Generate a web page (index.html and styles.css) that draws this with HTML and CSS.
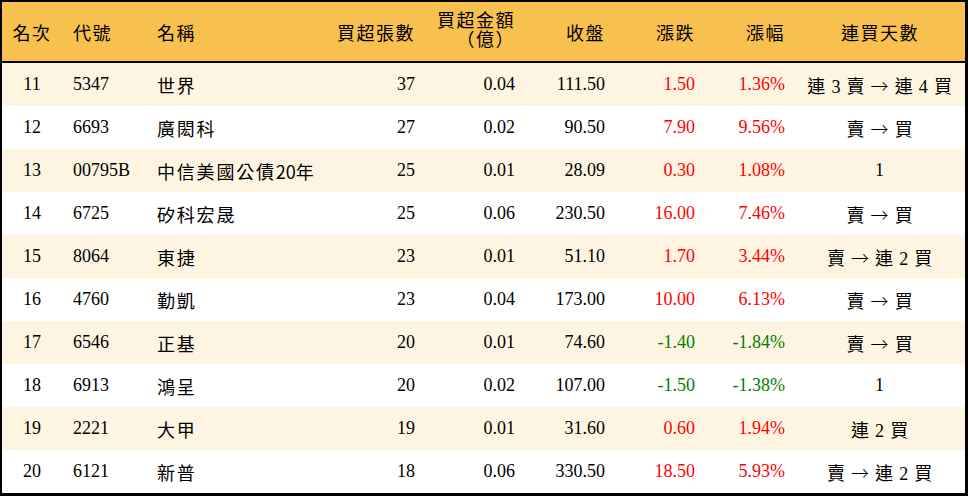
FILE: index.html
```html
<!DOCTYPE html>
<html lang="zh-Hant">
<head>
<meta charset="utf-8">
<link rel="stylesheet" href="styles.css">
</head>
<body>
<div class="board">
  <div class="row head">
    <div class="c ctr">名次</div>
    <div class="c lft">代號</div>
    <div class="c lft">名稱</div>
    <div class="c rgt">買超張數</div>
    <div class="c rgt two"><span>買超金額</span><span>（億）</span></div>
    <div class="c rgt">收盤</div>
    <div class="c rgt">漲跌</div>
    <div class="c rgt">漲幅</div>
    <div class="c ctr">連買天數</div>
  </div>
  <div class="row alt">
    <div class="c ctr">11</div><div class="c lft">5347</div><div class="c lft zh">世界</div>
    <div class="c rgt">37</div><div class="c rgt">0.04</div><div class="c rgt">111.50</div>
    <div class="c rgt up">1.50</div><div class="c rgt up">1.36%</div><div class="c ctr days">連 3 賣 <span class="ar">→</span> 連 4 買</div>
  </div>
  <div class="row">
    <div class="c ctr">12</div><div class="c lft">6693</div><div class="c lft zh">廣閎科</div>
    <div class="c rgt">27</div><div class="c rgt">0.02</div><div class="c rgt">90.50</div>
    <div class="c rgt up">7.90</div><div class="c rgt up">9.56%</div><div class="c ctr days">賣 <span class="ar">→</span> 買</div>
  </div>
  <div class="row alt">
    <div class="c ctr">13</div><div class="c lft">00795B</div><div class="c lft zh">中信美國公債<span class="cd">20</span>年</div>
    <div class="c rgt">25</div><div class="c rgt">0.01</div><div class="c rgt">28.09</div>
    <div class="c rgt up">0.30</div><div class="c rgt up">1.08%</div><div class="c ctr days">1</div>
  </div>
  <div class="row">
    <div class="c ctr">14</div><div class="c lft">6725</div><div class="c lft zh">矽科宏晟</div>
    <div class="c rgt">25</div><div class="c rgt">0.06</div><div class="c rgt">230.50</div>
    <div class="c rgt up">16.00</div><div class="c rgt up">7.46%</div><div class="c ctr days">賣 <span class="ar">→</span> 買</div>
  </div>
  <div class="row alt">
    <div class="c ctr">15</div><div class="c lft">8064</div><div class="c lft zh">東捷</div>
    <div class="c rgt">23</div><div class="c rgt">0.01</div><div class="c rgt">51.10</div>
    <div class="c rgt up">1.70</div><div class="c rgt up">3.44%</div><div class="c ctr days">賣 <span class="ar">→</span> 連 2 買</div>
  </div>
  <div class="row">
    <div class="c ctr">16</div><div class="c lft">4760</div><div class="c lft zh">勤凱</div>
    <div class="c rgt">23</div><div class="c rgt">0.04</div><div class="c rgt">173.00</div>
    <div class="c rgt up">10.00</div><div class="c rgt up">6.13%</div><div class="c ctr days">賣 <span class="ar">→</span> 買</div>
  </div>
  <div class="row alt">
    <div class="c ctr">17</div><div class="c lft">6546</div><div class="c lft zh">正基</div>
    <div class="c rgt">20</div><div class="c rgt">0.01</div><div class="c rgt">74.60</div>
    <div class="c rgt down">-1.40</div><div class="c rgt down">-1.84%</div><div class="c ctr days">賣 <span class="ar">→</span> 買</div>
  </div>
  <div class="row">
    <div class="c ctr">18</div><div class="c lft">6913</div><div class="c lft zh">鴻呈</div>
    <div class="c rgt">20</div><div class="c rgt">0.02</div><div class="c rgt">107.00</div>
    <div class="c rgt down">-1.50</div><div class="c rgt down">-1.38%</div><div class="c ctr days">1</div>
  </div>
  <div class="row alt">
    <div class="c ctr">19</div><div class="c lft">2221</div><div class="c lft zh">大甲</div>
    <div class="c rgt">19</div><div class="c rgt">0.01</div><div class="c rgt">31.60</div>
    <div class="c rgt up">0.60</div><div class="c rgt up">1.94%</div><div class="c ctr days">連 2 買</div>
  </div>
  <div class="row">
    <div class="c ctr">20</div><div class="c lft">6121</div><div class="c lft zh">新普</div>
    <div class="c rgt">18</div><div class="c rgt">0.06</div><div class="c rgt">330.50</div>
    <div class="c rgt up">18.50</div><div class="c rgt up">5.93%</div><div class="c ctr days">賣 <span class="ar">→</span> 連 2 買</div>
  </div>
</div>
</body>
</html>
```
FILE: styles.css
```css
html, body {
  margin: 0;
  padding: 0;
  background: #ffffff;
}
body {
  font-family: "Liberation Serif", "Noto Sans CJK TC", serif;
  font-size: 18px;
  color: #000000;
}
.board {
  width: 968px;
  height: 496px;
  box-sizing: border-box;
  border-top: 2px solid #000;
  border-left: 2px solid #000;
  border-right: 3px solid #000;
  border-bottom: 3px solid #000;
  display: flex;
  flex-direction: column;
}
.row {
  display: grid;
  grid-template-columns: 60px 84px 184px 95px 100px 90px 90px 90px 170px;
  height: 43px;
  align-items: center;
  background: #ffffff;
}
.row.alt {
  background: #fdf5e2;
}
.row.head {
  height: 59px;
  border-bottom: 2px solid #000;
  background: #f8c04e;
  letter-spacing: 1.5px;
}
.c {
  white-space: nowrap;
}
.ctr {
  text-align: center;
}
.lft {
  text-align: left;
  padding-left: 11px;
}
.rgt {
  text-align: right;
  padding-right: 10px;
}
.two {
  display: flex;
  flex-direction: column;
  align-items: flex-end;
  line-height: 19px;
  margin-top: -2px;
}
.zh {
  letter-spacing: 1.8px;
}
.cd {
  font-family: "Noto Sans CJK TC", sans-serif;
  letter-spacing: 0;
}
.days {
  letter-spacing: 0.8px;
}
.ar {
  font-family: "Noto Sans CJK TC", sans-serif;
  font-weight: 300;
}
.up {
  color: #ff0000;
}
.down {
  color: #008000;
}
```
